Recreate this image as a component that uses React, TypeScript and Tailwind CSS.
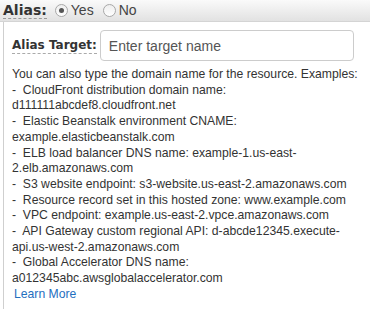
import { useState } from "react";

const lines: Array<string> = [
  "You can also type the domain name for the resource. Examples:",
  "-\u00a0 CloudFront distribution domain name:",
  "d111111abcdef8.cloudfront.net",
  "-\u00a0 Elastic Beanstalk environment CNAME:",
  "example.elasticbeanstalk.com",
  "-\u00a0 ELB load balancer DNS name: example-1.us-east-",
  "2.elb.amazonaws.com",
  "-\u00a0 S3 website endpoint: s3-website.us-east-2.amazonaws.com",
  "-\u00a0 Resource record set in this hosted zone: www.example.com",
  "-\u00a0 VPC endpoint: example.us-east-2.vpce.amazonaws.com",
  "-\u00a0 API Gateway custom regional API: d-abcde12345.execute-",
  "api.us-west-2.amazonaws.com",
  "-\u00a0 Global Accelerator DNS name:",
  "a012345abc.awsglobalaccelerator.com",
];

function Radio({ checked }: { checked: boolean }) {
  return (
    <span className="w-[13px] h-[13px] rounded-full border border-[#a8a8a8] bg-gradient-to-b from-[#eeeeee] to-[#ffffff] flex items-center justify-center">
      {checked && <span className="w-[5px] h-[5px] rounded-full bg-[#555]" />}
    </span>
  );
}

export default function App() {
  const [alias, setAlias] = useState<boolean>(true);

  return (
    <div className="w-[370px] h-[309px] overflow-hidden bg-white font-['Liberation_Sans',Arial,sans-serif] text-[#333]">
      <div className="h-[22px] flex items-center gap-[8px] pl-[3px] bg-gradient-to-b from-[#fafafa] to-[#e2e2e2] border-b border-[#d4d4d4]">
        <span className="font-['DejaVu_Sans',sans-serif] font-bold text-[14px] text-[#333] border-b border-dashed border-[#999] leading-[15px]">
          Alias:
        </span>
        <label className="flex items-center gap-[3px] text-[14px] text-[#444]" onClick={() => setAlias(true)}>
          <Radio checked={alias} />
          <span>Yes</span>
        </label>
        <label className="flex items-center gap-[3px] ml-[1px] text-[14px] text-[#444]" onClick={() => setAlias(false)}>
          <Radio checked={!alias} />
          <span>No</span>
        </label>
      </div>

      <div className="ml-[3px] border-l border-[#cfcfcf] h-[287px] pl-[8px] pt-[8px]">
        <div className="flex items-center gap-[3px]">
          <span className="font-['DejaVu_Sans',sans-serif] font-bold text-[12px] text-[#333] border-b border-dashed border-[#aaa] leading-[15px]">
            Alias Target:
          </span>
          <input
            className="w-[254px] h-[31px] border border-[#ccc] rounded-[4px] px-[8px] text-[14px] text-[#333] placeholder:text-[#555] outline-none"
            placeholder="Enter target name"
          />
        </div>

        <div className="mt-[6px] text-[12.2px] leading-[15.7px]">
          {lines.map((line, i) => (
            <div key={i} className="whitespace-nowrap">
              {line}
            </div>
          ))}
          <a href="#" className="ml-[2px] text-[#1f6fbf]">
            Learn More
          </a>
        </div>
      </div>
    </div>
  );
}
